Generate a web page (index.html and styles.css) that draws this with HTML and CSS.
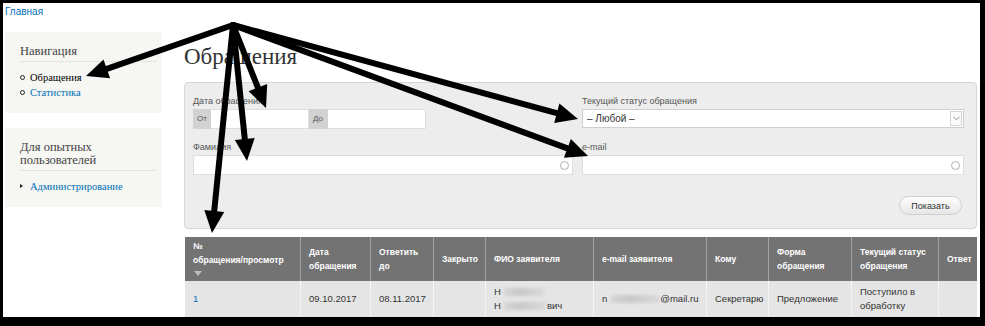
FILE: index.html
```html
<!DOCTYPE html>
<html lang="ru">
<head>
<meta charset="utf-8">
<title>Обращения</title>
<link rel="stylesheet" href="styles.css">
</head>
<body>
<div class="frame">
  <div class="breadcrumb"><a href="#">Главная</a></div>
  <div class="layout">
    <aside class="sidebar">
      <section class="block">
        <h2 class="block-title">Навигация</h2>
        <ul class="menu menu-circle">
          <li class="active">Обращения</li>
          <li><a href="#">Статистика</a></li>
        </ul>
      </section>
      <section class="block">
        <h2 class="block-title">Для опытных пользователей</h2>
        <ul class="menu menu-tri">
          <li><a href="#">Администрирование</a></li>
        </ul>
      </section>
    </aside>
    <main class="content">
      <h1 class="page-title">Обращения</h1>
      <form class="filters">
        <div class="filter-grid">
          <div class="field">
            <label class="field-label">Дата обращения</label>
            <div class="date-range">
              <span class="prefix">От</span><span class="input date"></span><span class="prefix">До</span><span class="input date"></span>
            </div>
          </div>
          <div class="field">
            <label class="field-label">Текущий статус обращения</label>
            <div class="select">
              <span class="select-value">– Любой –</span>
              <span class="select-arrow"><svg width="7" height="5" viewBox="0 0 7 5"><polyline points="0.5,0.8 3.5,3.8 6.5,0.8" fill="none" stroke="#8a8a8a" stroke-width="1"/></svg></span>
            </div>
          </div>
          <div class="field">
            <label class="field-label">Фамилия</label>
            <div class="input text"><span class="throbber"></span></div>
          </div>
          <div class="field">
            <label class="field-label">e-mail</label>
            <div class="input text"><span class="throbber"></span></div>
          </div>
        </div>
        <div class="actions"><button type="button" class="btn">Показать</button></div>
      </form>
      <table class="results">
        <thead>
          <tr>
            <th class="c1">№<br>обращения/просмотр<span class="sort-arrow"></span></th>
            <th class="c2">Дата<br>обращения</th>
            <th class="c3">Ответить<br>до</th>
            <th class="c4">Закрыто</th>
            <th class="c5">ФИО заявителя</th>
            <th class="c6">e-mail заявителя</th>
            <th class="c7">Кому</th>
            <th class="c8">Форма<br>обращения</th>
            <th class="c9">Текущий статус<br>обращения</th>
            <th class="c10">Ответ</th>
          </tr>
        </thead>
        <tbody>
          <tr>
            <td><a href="#">1</a></td>
            <td>09.10.2017</td>
            <td>08.11.2017</td>
            <td></td>
            <td>Н<span class="blur b1"></span><br>Н<span class="blur b2"></span>вич</td>
            <td>n<span class="blur b3"></span>@mail.ru</td>
            <td>Секретарю</td>
            <td>Предложение</td>
            <td>Поступило в<br>обработку</td>
            <td></td>
          </tr>
        </tbody>
      </table>
    </main>
  </div>
</div>
<svg class="arrows" width="985" height="326" viewBox="0 0 985 326">
  <g stroke="#000" stroke-width="6" stroke-linecap="round" fill="none">
    <line x1="233" y1="25" x2="106.8" y2="68.8"/>
    <line x1="233" y1="25" x2="257.9" y2="87.6"/>
    <line x1="233" y1="25" x2="244.8" y2="139.1"/>
    <line x1="233" y1="25" x2="214.2" y2="211.1"/>
    <line x1="233" y1="25" x2="556.8" y2="113.2"/>
    <line x1="233" y1="25" x2="567.4" y2="148.4"/>
  </g>
  <g fill="#000">
    <polygon points="86,76 103.5,59.4 110.1,78.3"/>
    <polygon points="266,108 248.6,91.2 267.2,83.9"/>
    <polygon points="247,161 234.8,140.1 254.7,138.1"/>
    <polygon points="212,233 204.3,210.1 224.2,212.1"/>
    <polygon points="578,119 554.2,122.9 559.4,103.6"/>
    <polygon points="588,156 563.9,157.8 570.9,139.0"/>
  </g>
</svg>
</body>
</html>
```
FILE: styles.css
```css
html, body {
  margin: 0;
  padding: 0;
}
body {
  position: relative;
  width: 985px;
  height: 326px;
  overflow: hidden;
  background: #000;
  font-family: "Liberation Sans", Arial, sans-serif;
  color: #333;
}
a {
  color: #0071b3;
  text-decoration: none;
}
.frame {
  box-sizing: border-box;
  width: 985px;
  height: 326px;
  border-style: solid;
  border-color: #000;
  border-width: 3px 5px 9px 3px;
  background: #fff;
  overflow: hidden;
}
.breadcrumb {
  box-sizing: border-box;
  height: 16px;
  padding: 2px 0 0 2px;
  font-size: 10px;
  line-height: 14px;
}
.layout {
  display: flex;
  align-items: flex-start;
}
.sidebar {
  width: 157px;
  margin: 13px 0 0 2px;
  display: flex;
  flex-direction: column;
  gap: 15px;
}
.block {
  background: #f6f6f2;
  padding: 13px 5px 13px 15px;
}
.block-title {
  margin: 0;
  padding-bottom: 3px;
  border-bottom: 1px solid #e4e4df;
  font-family: "Liberation Serif", "Times New Roman", serif;
  font-weight: normal;
  font-size: 12.5px;
  line-height: 13px;
  color: #444;
}
.menu {
  list-style: none;
  margin: 8px 0 0;
  padding: 0;
  font-family: "Liberation Serif", "Times New Roman", serif;
  font-size: 10.5px;
  line-height: 15px;
}
.menu li {
  position: relative;
  padding-left: 10px;
}
.menu .active {
  color: #000;
}
.menu-circle li::before {
  content: "";
  position: absolute;
  left: 0;
  top: 5px;
  width: 3px;
  height: 3px;
  border: 1px solid #222;
  border-radius: 50%;
}
.menu-tri li::before {
  content: "";
  position: absolute;
  left: 0;
  top: 5px;
  border-top: 2.5px solid transparent;
  border-bottom: 2.5px solid transparent;
  border-left: 3px solid #222;
}
.content {
  width: 793px;
  margin-left: 22px;
}
.page-title {
  margin: 24px 0 11px;
  font-family: "Liberation Serif", "Times New Roman", serif;
  font-weight: normal;
  font-size: 23px;
  line-height: 28px;
  color: #333;
}
.filters {
  box-sizing: border-box;
  height: 147px;
  margin: 0;
  padding: 12px 12px 13px 8px;
  border: 1px solid #d6d6d6;
  border-radius: 4px;
  background: #ededed;
}
.filter-grid {
  display: grid;
  grid-template-columns: 380px 382px;
  column-gap: 9px;
  row-gap: 12px;
}
.field-label {
  display: block;
  height: 12px;
  margin-bottom: 2px;
  font-size: 9px;
  line-height: 12px;
  color: #555;
}
.date-range {
  display: flex;
  height: 20px;
}
.prefix {
  box-sizing: border-box;
  width: 18px;
  height: 20px;
  padding-left: 4px;
  background: #d2d2d2;
  font-size: 8px;
  line-height: 20px;
  color: #555;
}
.prefix + .input + .prefix {
  width: 19px;
}
.input {
  box-sizing: border-box;
  height: 20px;
  background: #fff;
  border: 1px solid #dedede;
}
.input.date {
  width: 98px;
  border-left: 0;
}
.input.text {
  display: flex;
  align-items: center;
  justify-content: flex-end;
  padding-right: 3px;
}
.throbber {
  box-sizing: border-box;
  width: 9px;
  height: 9px;
  border: 1px solid #b0b0b0;
  border-radius: 50%;
}
.select {
  box-sizing: border-box;
  height: 19px;
  display: flex;
  align-items: center;
  justify-content: space-between;
  padding: 0 1px 0 4px;
  background: #fff;
  border: 1px solid #cfcfcf;
}
.select-value {
  font-size: 10px;
  color: #333;
}
.select-arrow {
  box-sizing: border-box;
  width: 12px;
  height: 15px;
  display: flex;
  align-items: center;
  justify-content: center;
  border: 1px solid #d4d4d4;
  background: #fafafa;
}
.actions {
  display: flex;
  justify-content: flex-end;
  margin-top: 21px;
  padding-right: 2px;
}
.btn {
  box-sizing: border-box;
  width: 63px;
  height: 19px;
  padding: 0;
  border: 1px solid #d0d0d0;
  border-radius: 10px;
  background: linear-gradient(#ffffff, #e6e6e6);
  font-family: "Liberation Sans", Arial, sans-serif;
  font-size: 9px;
  color: #333;
}
.results {
  width: 792px;
  margin: 8px 0 0 1px;
  border-collapse: collapse;
  table-layout: fixed;
}
.results th,
.results td {
  padding: 0 8px;
  text-align: left;
  vertical-align: middle;
  white-space: nowrap;
  overflow: visible;
}
.results th {
  height: 44px;
  background: #737373;
  color: #fff;
  font-size: 8.5px;
  font-weight: bold;
  line-height: 14px;
  border-left: 1px solid #a2a2a2;
}
.results td {
  height: 36px;
  background: #e5e5e5;
  color: #333;
  font-size: 9.5px;
  line-height: 14px;
  border-left: 1px solid #f4f4f4;
}
.results th:first-child,
.results td:first-child {
  border-left: 0;
}
.c1 { width: 99px; }
.c2 { width: 53px; }
.c3 { width: 46px; }
.c4 { width: 35px; }
.c5 { width: 91px; }
.c6 { width: 96px; }
.c7 { width: 45px; }
.c8 { width: 66px; }
.c9 { width: 70px; }
.c10 { width: 22px; }
.sort-arrow {
  display: block;
  width: 0;
  height: 0;
  margin: 4px 0 3px 1px;
  border-left: 4px solid transparent;
  border-right: 4px solid transparent;
  border-top: 5px solid #bdbdbd;
}
.blur {
  display: inline-block;
  height: 8px;
  vertical-align: middle;
  background: linear-gradient(90deg, #d6d6d6, #c9c9c9 40%, #d2d2d2 70%, #dadada);
  filter: blur(1.5px);
}
.b1 { width: 40px; margin-left: 3px; }
.b2 { width: 42px; margin: 0 1px 0 3px; }
.b3 { width: 48px; margin: 0 1px 0 4px; }
.arrows {
  position: absolute;
  left: 0;
  top: 0;
  pointer-events: none;
}
```
